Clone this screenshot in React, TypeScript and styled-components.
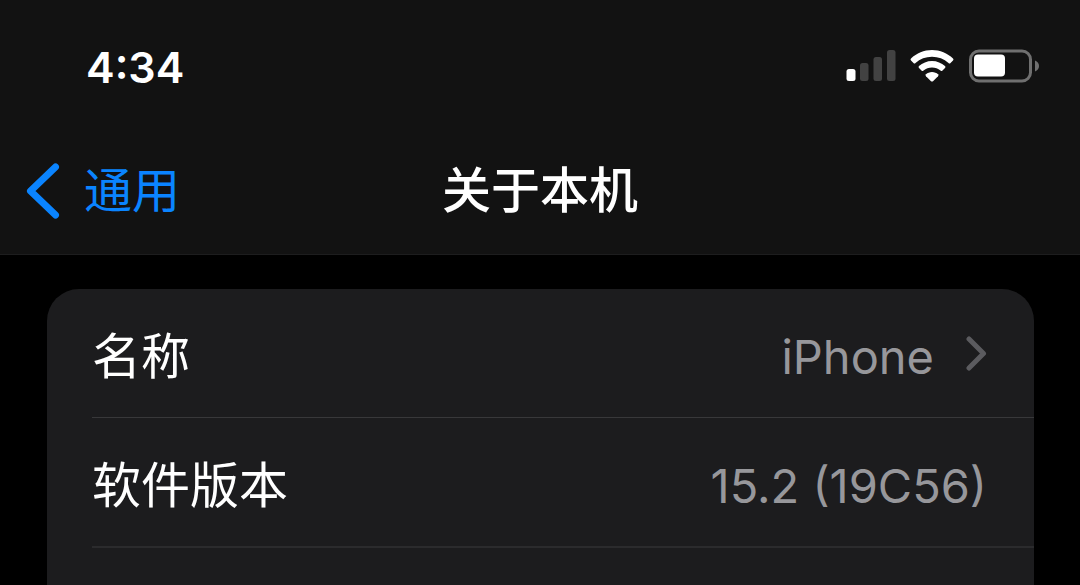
import React from "react";
import styled, { createGlobalStyle } from "styled-components";

const GlobalStyle = createGlobalStyle`
  * { box-sizing: border-box; }
  body {
    margin: 0;
    background: #000;
    color: #fff;
    font-family: Inter, "Noto Sans CJK SC", sans-serif;
  }
`;

const Header = styled.header`
  background: #121212;
  border-bottom: 1px solid #1d1d1e;
`;

const StatusBar = styled.div`
  display: flex;
  align-items: center;
  justify-content: space-between;
  height: 132px;
  padding: 0 40px 0 86px;
`;

const Clock = styled.time`
  font-size: 43px;
  line-height: 52px;
  font-weight: 600;
  padding-top: 2px;
`;

const StatusIcons = styled.div`
  display: flex;
  align-items: center;
  gap: 14px;
`;

const NavBar = styled.nav`
  display: grid;
  grid-template-columns: 1fr auto 1fr;
  align-items: center;
  height: 122px;
  padding: 0 24px 4px;
`;

const BackLink = styled.a`
  display: flex;
  align-items: center;
  gap: 23px;
  justify-self: start;
  color: #0a84ff;
  font-size: 48px;
  line-height: 64px;
  text-decoration: none;
`;

const Title = styled.h1`
  margin: 0;
  font-size: 49px;
  line-height: 64px;
  font-weight: 500;
`;

const Content = styled.main`
  padding: 34px 46px 0 47px;
`;

const Card = styled.ul`
  margin: 0;
  padding: 0 0 0 45px;
  list-style: none;
  background: #1c1c1e;
  border-radius: 32px 32px 0 0;
`;

const Row = styled.li`
  display: flex;
  align-items: center;
  justify-content: space-between;
  height: 130px;
  padding: 8px 47px 0 0;
  border-bottom: 2px solid #2b2b2d;

  &:first-child { height: 129px; border-bottom-width: 1px; border-color: #38383a; }
  &:last-child { height: 37px; border: 0; }
`;

const Label = styled.span`
  font-size: 49px;
  line-height: 64px;
`;

const Value = styled.span`
  display: flex;
  align-items: center;
  gap: 32px;
  color: #97979b;
  font-size: 47px;
  line-height: 64px;

  svg { margin-bottom: 6px; }
`;

const Signal = () => (
  <svg width="50" height="32" viewBox="0 0 50 32" role="img" aria-label="Signal">
    <rect x="0.5" y="19" width="9" height="12" rx="2.5" fill="#fff" />
    <rect x="14" y="13" width="8.5" height="18" rx="2.5" fill="#424242" />
    <rect x="27.500" y="7" width="8.500" height="24" rx="2.500" fill="#424242" />
    <rect x="41" y="0" width="8.500" height="31" rx="2.500" fill="#424242" />
  </svg>
);

const Wifi = () => (
  <svg width="44" height="32" viewBox="0 0 44 32" fill="#fff" role="img" aria-label="Wi-Fi">
    <path d="M22 0C14 0 6.600 3.200 1 8.500Q0 9.500 1 10.500L3.500 13Q4.500 14 5.500 13C10 9 15.700 6.800 22 6.800S34 9 38.500 13Q39.500 14 40.500 13L43 10.500Q44 9.500 43 8.500C37.400 3.200 30 0 22 0Z" />
    <path d="M22 11C17 11 12.500 13 9 16Q8 17 9 18L11.500 20.500Q12.500 21.500 13.500 20.500C16 18.500 18.700 17.500 22 17.500S28 18.500 30.500 20.500Q31.500 21.500 32.500 20.500L35 18Q36 17 35 16C31.500 13 27 11 22 11Z" />
    <path d="M22 22C19.500 22 17.500 23 16 24.200Q15 25.200 16 26.200L21 31.200Q22 32 23 31.200L28 26.200Q29 25.200 28 24.200C26.500 23 24.500 22 22 22Z" />
  </svg>
);

const Battery = () => (
  <svg width="72" height="34" viewBox="0 0 72 34" role="img" aria-label="Battery">
    <rect x="2.500" y="2" width="60" height="30" rx="8.500" fill="none" stroke="#6f6f6f" strokeWidth="3" />
    <rect x="6" y="5.500" width="31" height="22" rx="4" fill="#fff" />
    <path d="M67 11.500C69.700 12.500 71 14.500 71 17S69.700 21.500 67 22.500Z" fill="#707070" />
  </svg>
);

const BackChevron = () => (
  <svg width="37" height="56" viewBox="0 0 37 56" fill="none" aria-hidden="true">
    <path d="M31.500 4L6.500 28L31.500 52" stroke="#0a84ff" strokeWidth="7" strokeLinecap="round" strokeLinejoin="round" />
  </svg>
);

const Chevron = () => (
  <svg width="21" height="36" viewBox="0 0 21 36" fill="none" aria-hidden="true">
    <path d="M3 3L17.500 17.500L3 32" stroke="#5b5b5f" strokeWidth="5" strokeLinecap="round" strokeLinejoin="round" />
  </svg>
);

export default function App() {
  return (
    <>
      <GlobalStyle />
      <Header>
        <StatusBar>
          <Clock>4:34</Clock>
          <StatusIcons>
            <Signal />
            <Wifi />
            <Battery />
          </StatusIcons>
        </StatusBar>
        <NavBar>
          <BackLink href="#general">
            <BackChevron />
            通用
          </BackLink>
          <Title>关于本机</Title>
        </NavBar>
      </Header>
      <Content>
        <Card>
          <Row>
            <Label>名称</Label>
            <Value>
              iPhone
              <Chevron />
            </Value>
          </Row>
          <Row>
            <Label>软件版本</Label>
            <Value>15.2 (19C56)</Value>
          </Row>
          <Row />
        </Card>
      </Content>
    </>
  );
}
